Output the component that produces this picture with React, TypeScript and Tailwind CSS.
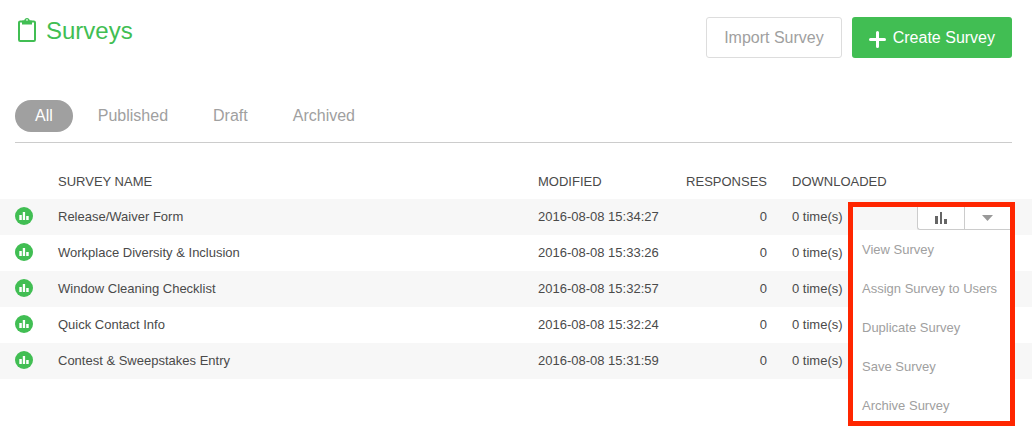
import { useState } from "react";

type Survey = { name: string; modified: string; responses: number; downloaded: number };

const surveys: Survey[] = [
  { name: "Release/Waiver Form", modified: "2016-08-08 15:34:27", responses: 0, downloaded: 0 },
  { name: "Workplace Diversity & Inclusion", modified: "2016-08-08 15:33:26", responses: 0, downloaded: 0 },
  { name: "Window Cleaning Checklist", modified: "2016-08-08 15:32:57", responses: 0, downloaded: 0 },
  { name: "Quick Contact Info", modified: "2016-08-08 15:32:24", responses: 0, downloaded: 0 },
  { name: "Contest & Sweepstakes Entry", modified: "2016-08-08 15:31:59", responses: 0, downloaded: 0 },
];

const tabs = ["All", "Published", "Draft", "Archived"];

const actions = ["View Survey", "Assign Survey to Users", "Duplicate Survey", "Save Survey", "Archive Survey"];

function ClipboardIcon() {
  return (
    <svg width="18" height="26" viewBox="0 0 18 26" fill="none" aria-hidden="true">
      <rect x="1" y="3.4" width="16" height="19.6" rx="1.2" stroke="#41be53" strokeWidth="2" />
      <path
        fill="#41be53"
        fillRule="evenodd"
        d="M4 6.500V3.500C4 2.700 4.500 2.400 5.200 2.400H6.200C6.500.9 7.500 0 9 0s2.500.9 2.800 2.400h1c.7 0 1.200.3 1.200 1.100v3zM9 1.300a1.100 1.100 0 1 0 0 2.200a1.100 1.100 0 0 0 0-2.200z"
      />
    </svg>
  );
}

function ChartBadge() {
  return (
    <svg width="18" height="18" viewBox="0 0 18 18" className="block" aria-hidden="true">
      <circle cx="9" cy="9" r="9" fill="#41be53" />
      <path fill="#fff" d="M4.300 8h2.500v5H4.300zM7.800 5h2.300v8H7.800zM11.200 9h2.500v4h-2.500z" />
    </svg>
  );
}

function RowMenu() {
  return (
    <div className="absolute top-[3px] right-[17px] z-10 w-[167px] border-[5px] border-[#ff2600]">
      <div className="flex justify-end">
        <div className="flex h-[23px] w-[93px] rounded-bl-[3px] border-b border-l border-[#ccc] bg-white">
          <button type="button" aria-label="Responses" className="flex flex-1 items-center justify-center">
            <svg width="12" height="12" viewBox="0 0 12 12" aria-hidden="true">
              <path fill="#666" d="M0 4h3v8H0zM5 0h2v12H5zM9 7h3v5H9z" />
            </svg>
          </button>
          <button
            type="button"
            aria-label="More actions"
            aria-expanded="true"
            className="flex flex-1 items-center justify-center border-l border-[#ccc]"
          >
            <svg width="11" height="6" viewBox="0 0 11 6" aria-hidden="true">
              <path fill="#999" d="M0 0h11L5.500 6z" />
            </svg>
          </button>
        </div>
      </div>
      <ul className="flex flex-col gap-[19px] bg-white pt-2.5 pb-[5px] pl-[9px]">
        {actions.map((action) => (
          <li key={action} className="flex">
            <button type="button" className="text-[13px] leading-5 whitespace-nowrap text-[#a0a0a0]">
              {action}
            </button>
          </li>
        ))}
      </ul>
    </div>
  );
}

export default function App() {
  const [tab, setTab] = useState("All");

  return (
    <main className="bg-white pb-16 font-['Liberation_Sans',Arial,sans-serif] text-[#4a4a4a]">
      <div className="pr-5 pl-[15px]">
        {/* Title and buttons */}
        <header className="flex items-start justify-between pt-[17px]">
          <h1 className="flex items-center gap-2.5 pl-[3px] text-2xl leading-7 text-[#41be53]">
            <ClipboardIcon />
            Surveys
          </h1>
          <div className="flex gap-2.5">
            <button
              type="button"
              className="h-[41px] rounded-[3px] border border-[#ddd] px-[17px] text-base text-[#a0a0a0]"
            >
              Import Survey
            </button>
            <button
              type="button"
              className="flex h-[41px] items-center gap-[7px] rounded-[3px] bg-[#41be53] px-[17px] text-base text-white"
            >
              <svg width="17" height="17" viewBox="0 0 17 17" className="mt-1" aria-hidden="true">
                <path stroke="#fff" strokeWidth="3" strokeLinecap="round" d="M8.500 1.500v14M1.500 8.500h14" />
              </svg>
              Create Survey
            </button>
          </div>
        </header>

        {/* Filter tabs */}
        <nav className="mt-[42px] flex gap-[5px] border-b border-[#ccc] pb-2.5">
          {tabs.map((t) => (
            <button
              key={t}
              type="button"
              onClick={() => setTab(t)}
              className={`h-8 rounded-full px-5 text-base ${t === tab ? "bg-[#a0a0a0] text-white" : "text-[#a0a0a0]"}`}
            >
              {t}
            </button>
          ))}
        </nav>
      </div>

      {/* Survey list */}
      <table className="w-full table-fixed text-left text-[13px] leading-5">
        <thead>
          <tr className="h-14">
            <th className="w-[58px]" aria-label="Status"></th>
            <th className="pt-[22px] font-normal">SURVEY NAME</th>
            <th className="w-[140px] pt-[22px] font-normal">MODIFIED</th>
            <th className="w-[89px] pt-[22px] text-right font-normal">RESPONSES</th>
            <th className="w-[125px] pt-[22px] pl-[25px] font-normal">DOWNLOADED</th>
            <th className="w-[140px]" aria-label="Actions"></th>
          </tr>
        </thead>
        <tbody>
          {surveys.map((s, i) => (
            <tr key={s.name} className="h-9 odd:bg-[#f7f7f7]">
              <td className="pb-0.5 pl-[15px]">
                <ChartBadge />
              </td>
              <td>{s.name}</td>
              <td>{s.modified}</td>
              <td className="text-right">{s.responses}</td>
              <td className="pl-[25px]">{s.downloaded} time(s)</td>
              <td className="relative">{i === 0 && <RowMenu />}</td>
            </tr>
          ))}
        </tbody>
      </table>
    </main>
  );
}
